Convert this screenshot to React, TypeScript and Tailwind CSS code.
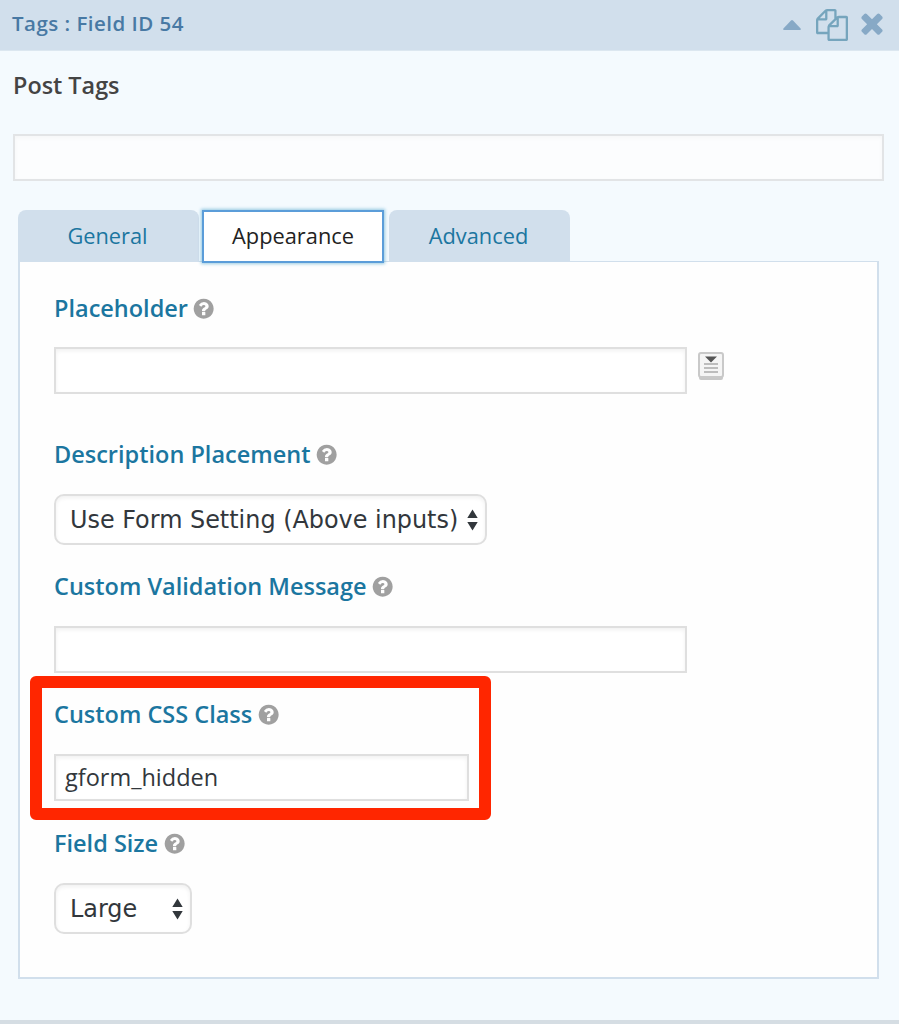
import type { ReactNode } from 'react'

const paths = {
  copy: 'M1696 384q40 0 68 28t28 68v1216q0 40-28 68t-68 28h-960q-40 0-68-28t-28-68v-288h-544q-40 0-68-28t-28-68v-672q0-40 20-88t48-76l408-408q28-28 76-48t88-20h416q40 0 68 28t28 68v328q68-40 128-40h416zm-544 213l-299 299h299v-299zm-640-384l-299 299h299v-299zm196 647l316-316v-416h-384v416q0 40-28 68t-68 28h-416v640h512v-256q0-40 20-88t48-76zm956 804v-1152h-384v416q0 40-28 68t-68 28h-416v640h896z',
  times: 'M1490 1322q0 40-28 68l-136 136q-28 28-68 28t-68-28l-294-294-294 294q-28 28-68 28t-68-28l-136-136q-28-28-28-68t28-68l294-294-294-294q-28-28-28-68t28-68l136-136q28-28 68-28t68 28l294 294 294-294q28-28 68-28t68 28l136 136q28 28 28 68t-28 68l-294 294 294 294q28 28 28 68z',
  help: 'M1024 1376v-192q0-14-9-23t-23-9h-192q-14 0-23 9t-9 23v192q0 14 9 23t23 9h192q14 0 23-9t9-23zm256-672q0-88-55.5-163t-138.5-116-170-41q-243 0-371 213-15 24 8 42l132 100q7 6 19 6 16 0 25-12 53-68 86-92 34-24 86-24 48 0 85.5 26t37.5 59q0 38-20 61t-68 45q-63 28-115.5 86.5t-52.5 125.5v36q0 14 9 23t23 9h192q14 0 23-9t9-23q0-19 21.5-49.5t54.5-49.5q32-18 49-28.5t46-35 44.5-48 28-60.5 12.5-81zm384 192q0 209-103 385.5t-279.5 279.5-385.5 103-385.5-103-279.5-279.5-103-385.5 103-385.5 279.5-279.5 385.5-103 385.5 103 279.5 279.5 103 385.5z',
}

function Icon({ name, className }: { name: keyof typeof paths; className: string }) {
  return (
    <svg viewBox="0 0 1792 1792" fill="currentColor" className={className}>
      <path d={paths[name]} />
    </svg>
  )
}

function Label({ children }: { children: ReactNode }) {
  return (
    <div className="flex h-10 items-center gap-[6px] text-[23.5px] font-semibold whitespace-nowrap text-[#1b76a0]">
      <span>{children}</span>
      <Icon name="help" className="-m-[1.66px] size-[23.33px] shrink-0 text-[#a0a0a0]" />
    </div>
  )
}

function TextBox({ className, children }: { className: string; children?: ReactNode }) {
  return (
    <div className={`flex h-[47px] items-center border-2 border-[#dfdfdf] bg-white px-[9px] text-[23.5px] text-[#32373c] shadow-[inset_0_2px_4px_rgba(0,0,0,0.06)] ${className}`}>
      {children}
    </div>
  )
}

function Select({ className, children }: { className: string; children: ReactNode }) {
  return (
    <div className={`flex h-[51px] items-center justify-between rounded-[10px] border-2 border-[#dfdfdf] bg-white pr-[7px] pl-[14px] font-['DejaVu_Sans',sans-serif] text-[23.9px] whitespace-nowrap text-[#32373c] shadow-[inset_0_2px_4px_rgba(0,0,0,0.06)] ${className}`}>
      <span className="pt-[2px]">{children}</span>
      <svg viewBox="0 0 11 22" className="h-[22px] w-[11px] shrink-0" fill="currentColor">
        <path d="M5.5 0.5L10.7 9H0.3zM5.5 21.5L10.7 13H0.3z" />
      </svg>
    </div>
  )
}

export default function App() {
  return (
    <div className="flex h-[1024px] w-[899px] flex-col overflow-hidden border-b-4 border-[#d5dde3] bg-[#f4fafe] font-['Open_Sans',sans-serif]">
      <header className="flex h-[51px] shrink-0 items-center justify-between border-b border-[#dce7f0] bg-[#d1dfec] pr-[11px] pb-px pl-3">
        <h1 className="pb-[3px] text-[20.5px] leading-none font-semibold tracking-[0.48px] text-[#4879a4]">Tags : Field ID 54</h1>
        <div className="flex items-center">
          <svg viewBox="0 0 18 10" className="mr-[15px] h-[10px] w-[18px]" fill="#87a9c6">
            <path d="M8 0.5Q9 -0.4 10 0.5L17.6 8.4Q18.3 10 17 10H1Q-0.3 10 0.4 8.4z" />
          </svg>
          <Icon name="copy" className="mr-2 size-8 text-[#76a5bd]" />
          <Icon name="times" className="mb-[3px] size-8 text-[#87a9c6]" />
        </div>
      </header>

      <main className="pr-[15px] pl-[13px]">
        <h2 className="mt-[14px] h-10 text-[23.4px] leading-10 font-semibold text-[#444]">Post Tags</h2>
        <div className="mt-[29px] h-[47px] border-2 border-[#e2e4e6] bg-[#fcfdfe] shadow-[inset_0_2px_4px_rgba(0,0,0,0.03)]" />

        <div className="mt-[29px] mr-[5px] ml-[5px]">
          <div className="flex h-[51px] text-[21.8px] text-[#1b76a0]">
            <div className="flex w-[181px] items-center justify-center rounded-t-lg bg-[#d1dfec] pt-[2px] pr-[2px]">General</div>
            <div className="relative z-10 ml-[3px] flex h-[53px] w-[182px] items-center justify-center border-2 border-[#5b9dd9] bg-white text-[#222] shadow-[0_0_3px_1px_rgba(30,140,190,0.45)]">
              Appearance
            </div>
            <div className="ml-[5px] flex w-[181px] items-center justify-center rounded-t-lg bg-[#d1dfec] pt-[2px] pr-[2px]">Advanced</div>
          </div>

          <section className="h-[718px] border-2 border-t border-[#d1dfec] bg-[#fefefe] pt-[27px] pl-[34px]">
            <Label>Placeholder</Label>
            <div className="mt-[18px] flex items-start">
              <TextBox className="w-[633px]" />
              <svg viewBox="0 0 26 28" className="mt-[5px] ml-[11px] h-7 w-[26px]">
                <rect x="1" y="3" width="24" height="25" rx="2" fill="#c8c8c8" />
                <rect x="1" y="1" width="24" height="24" rx="2" fill="#f5f5f5" stroke="#c9c9c9" strokeWidth="2" />
                <path d="M7 4.5H19L13 10.5z" fill="#555" />
                <path d="M6 12H20M6 16H20M6 20H20" stroke="#bdbdbd" strokeWidth="1.8" />
              </svg>
            </div>

            <div className="mt-[41px]">
              <Label>Description Placement</Label>
              <Select className="mt-[19px] w-[433px]">Use Form Setting (Above inputs)</Select>
            </div>

            <div className="mt-[22px]">
              <Label>Custom Validation Message</Label>
              <TextBox className="mt-[19px] w-[633px]" />
            </div>

            <div className="relative mt-[22px]">
              <div className="pointer-events-none absolute -top-[19px] -left-6 h-[144px] w-[461px] rounded-md border-[12px] border-[#ff2600]" />
              <Label>Custom CSS Class</Label>
              <TextBox className="mt-[19px] w-[415px]">gform_hidden</TextBox>
            </div>

            <div className="mt-[23px]">
              <Label>Field Size</Label>
              <Select className="mt-[19px] w-[138px]">Large</Select>
            </div>
          </section>
        </div>
      </main>
    </div>
  )
}
